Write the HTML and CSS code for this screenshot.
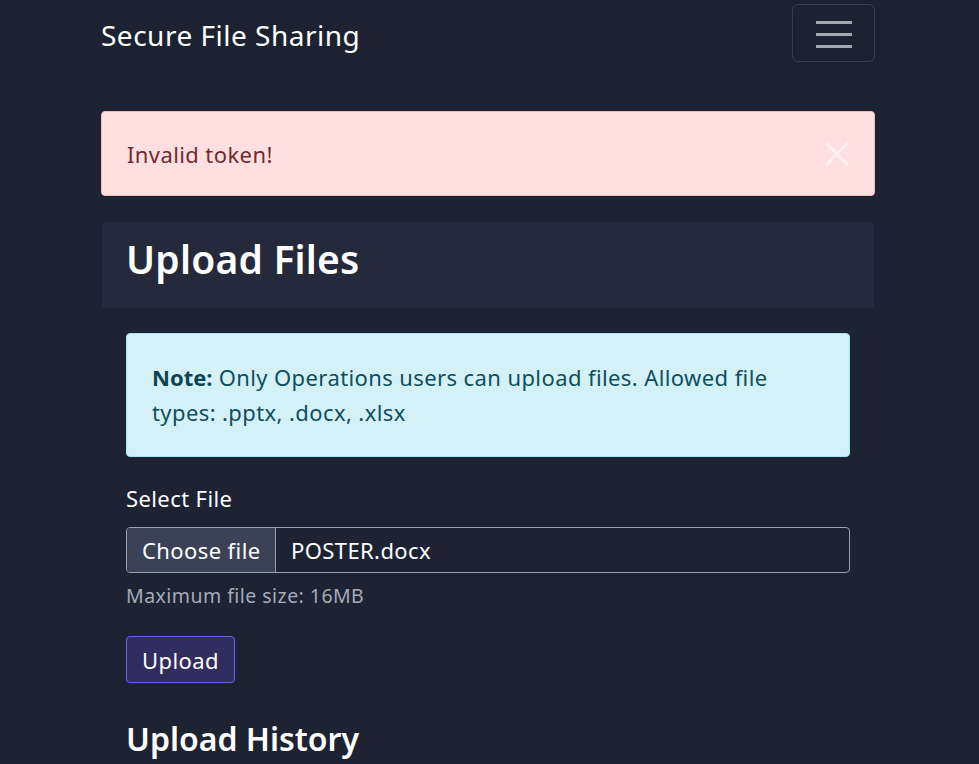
FILE: index.html
```html
<!DOCTYPE html>
<html lang="en">
<head>
<meta charset="utf-8">
<title>Secure File Sharing</title>
<link rel="stylesheet" href="styles.css">
</head>
<body>
<nav class="navbar">
  <div class="container nav-inner">
    <a class="brand" href="#">Secure File Sharing</a>
    <button class="toggler" type="button" aria-label="Toggle navigation">
      <svg width="36" height="28" viewBox="0 0 36 28" aria-hidden="true">
        <path d="M0 2.5H36M0 14.5H36M0 26.5H36" stroke="#a3a6ad" stroke-width="3"/>
      </svg>
    </button>
  </div>
</nav>
<main class="container">
  <div class="alert-danger">
    <span>Invalid token!</span>
    <button class="close" type="button" aria-label="Close">
      <svg width="26" height="26" viewBox="0 0 26 26" aria-hidden="true">
        <path d="M2 2L24 24M24 2L2 24" stroke="#ffffff" stroke-opacity="0.6" stroke-width="2.6"/>
      </svg>
    </button>
  </div>
  <section class="card">
    <header class="card-header"><h2>Upload Files</h2></header>
    <div class="card-body">
      <div class="alert-info"><strong>Note:</strong> Only Operations users can upload files. Allowed file types: .pptx, .docx, .xlsx</div>
      <label class="label">Select File</label>
      <div class="file-input">
        <span class="file-btn">Choose file</span>
        <span class="file-name">POSTER.docx</span>
      </div>
      <div class="help">Maximum file size: 16MB</div>
      <button class="btn-upload" type="button">Upload</button>
      <h3 class="history">Upload History</h3>
    </div>
  </section>
</main>
</body>
</html>
```
FILE: styles.css
```css
* { box-sizing: border-box; }
html, body { margin: 0; padding: 0; }
body {
  background: #1d2232;
  color: #ffffff;
  font-family: "Noto Sans", "Open Sans", sans-serif;
  font-size: 22px;
  letter-spacing: 0.4px;
  overflow: hidden;
  height: 764px;
}
.container {
  width: 774px;
  margin-left: 101px;
}
.navbar { height: 66px; }
.nav-inner {
  display: flex;
  justify-content: space-between;
  align-items: center;
  height: 66px;
  padding-top: 2px;
}
.brand {
  color: #ffffff;
  text-decoration: none;
  font-size: 28px;
  letter-spacing: 0.5px;
  line-height: 1;
  margin-top: 1px;
}
.toggler {
  width: 83px;
  height: 58px;
  margin-top: -3px;
  background: transparent;
  border: 1px solid #393f51;
  border-radius: 6px;
  display: flex;
  align-items: center;
  justify-content: center;
  padding: 0;
}
.toggler svg { display: block; margin-top: 2px; }
main { padding-top: 45px; }
.alert-danger {
  background: #ffdfe0;
  border: 1px solid #f5b8bd;
  border-radius: 4px;
  height: 85px;
  display: flex;
  align-items: center;
  justify-content: space-between;
  padding: 0 24px 0 25px;
  color: #732a2f;
  font-size: 22px;
}
.close {
  background: none;
  border: 0;
  padding: 0;
  display: flex;
}
.card {
  margin-top: 26px;
  margin-left: 1px;
  margin-right: 1px;
  background: #1e2333;
  border-radius: 4px;
}
.card-header {
  background: #242a3b;
  height: 86px;
  display: flex;
  align-items: center;
  padding: 0 24px;
  border-radius: 4px 4px 0 0;
}
.card-header h2 {
  margin: 0;
  font-size: 39px;
  font-weight: 600;
  letter-spacing: 0.2px;
  line-height: 1;
  margin-top: -13px;
}
.card-body { padding: 25px 24px 0; }
.alert-info {
  background: #d4f1f8;
  border: 1px solid #a6e2ef;
  border-radius: 4px;
  color: #0f4e5e;
  padding: 26px 25px 26px 25px;
  line-height: 35px;
  font-size: 22px;
}
.alert-info strong { font-weight: 700; color: #0c4453; letter-spacing: 0; }
.label {
  display: block;
  margin-top: 25px;
  line-height: 32px;
}
.file-input {
  margin-top: 13px;
  height: 46px;
  display: flex;
  border: 1px solid #9aa1ad;
  border-radius: 4px;
  overflow: hidden;
}
.file-btn {
  background: #3b4257;
  padding: 0 12px 0 15px;
  display: flex;
  align-items: center;
  border-right: 1px solid #9aa1ad;
  width: 149px;
  flex-shrink: 0;
  white-space: nowrap;
}
.file-name {
  display: flex;
  align-items: center;
  padding: 0 15px;
  white-space: nowrap;
}
.help {
  color: #a4abb8;
  font-size: 19.5px;
  letter-spacing: 0.45px;
  margin-top: 9px;
  line-height: 27px;
}
.btn-upload {
  margin-top: 27px;
  display: block;
  height: 47px;
  padding: 0 15px;
  background: #312d5e;
  border: 1px solid #6e5fe6;
  border-radius: 4px;
  color: #ffffff;
  font-family: inherit;
  font-size: 22px;
  letter-spacing: 0.4px;
}
.history {
  margin: 37px 0 0;
  font-size: 32px;
  font-weight: 600;
  letter-spacing: 0;
  line-height: 1.2;
}
```
